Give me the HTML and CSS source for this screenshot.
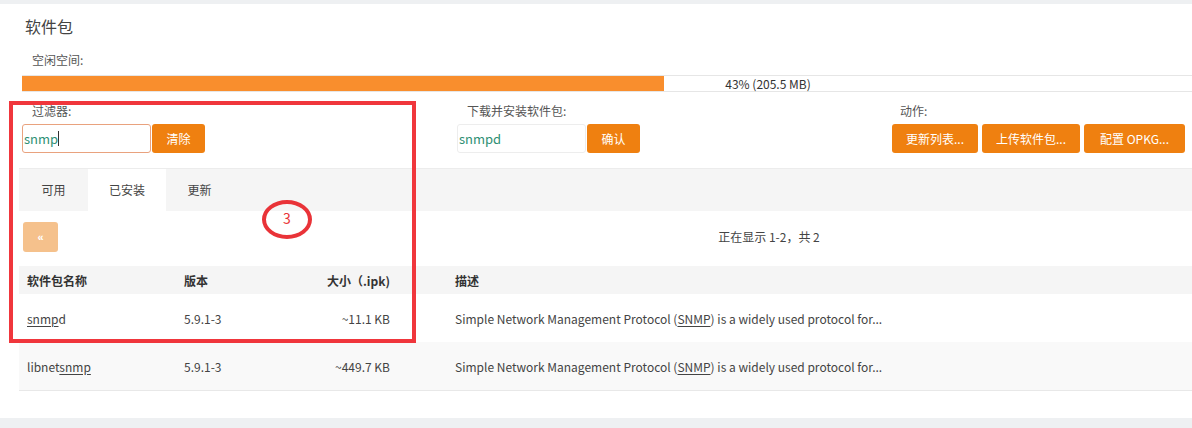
FILE: index.html
```html
<!DOCTYPE html>
<html lang="zh-CN">

<head>
  <meta charset="UTF-8">
  <meta
    name="viewport"
    content="width=device-width, initial-scale=1.0"
  >

  <title>软件包</title>

  <link rel="stylesheet" href="styles.css">
</head>

<body>
  <main class="page">
    <section class="panel">
      <h2 class="panel__title">软件包</h2>

      <div class="free">
        <div class="free__label">空闲空间:</div>
        <div class="bar">
          <div class="bar__fill" style="width: 43%"></div>
          <div class="bar__text">43% (205.5 MB)</div>
        </div>
      </div>

      <div class="controls">
        <div class="control">
          <div class="control__label">过滤器:</div>
          <div class="control__row">
            <div class="field field--focus">snmp<span class="field__caret"></span></div>
            <button class="btn">清除</button>
          </div>
        </div>

        <div class="control">
          <div class="control__label">下载并安装软件包:</div>
          <div class="control__row">
            <div class="field">snmpd</div>
            <button class="btn">确认</button>
          </div>
        </div>

        <div class="control control--actions">
          <div class="control__label">动作:</div>
          <div class="control__row control__row--gap">
            <button class="btn btn--update">更新列表...</button>
            <button class="btn btn--upload">上传软件包...</button>
            <button class="btn btn--config">配置 OPKG...</button>
          </div>
        </div>
      </div>

      <ul class="tabs">
        <li class="tabs__item">可用</li>
        <li class="tabs__item tabs__item--active">已安装</li>
        <li class="tabs__item">更新</li>
      </ul>

      <div class="pager">
        <button class="pager__prev">«</button>
        <div class="pager__info">正在显示 1-2，共 2</div>
      </div>

      <table class="pkgs">
        <thead>
          <tr>
            <th class="pkgs__name">软件包名称</th>
            <th class="pkgs__version">版本</th>
            <th class="pkgs__size">大小（.ipk)</th>
            <th class="pkgs__desc">描述</th>
          </tr>
        </thead>
        <tbody>
          <tr>
            <td><u>snmp</u>d</td>
            <td>5.9.1-3</td>
            <td class="pkgs__size">~11.1 KB</td>
            <td>Simple Network Management Protocol (<u>SNMP</u>) is a widely used protocol for...</td>
          </tr>
          <tr class="pkgs__row--alt">
            <td>libnet<u>snmp</u></td>
            <td>5.9.1-3</td>
            <td class="pkgs__size">~449.7 KB</td>
            <td>Simple Network Management Protocol (<u>SNMP</u>) is a widely used protocol for...</td>
          </tr>
        </tbody>
      </table>

      <!-- annotation drawn over the screenshot -->
      <div class="mark"></div>
      <div class="mark-circle">3</div>
    </section>
  </main>
</body>

</html>
```

FILE: styles.css
```css
body {
  margin: 0;
  overflow: hidden;
  background-color: #eef0f2;
  font-family: 'Noto Sans CJK SC', 'Open Sans', sans-serif;
  font-size: 12px;
  color: #444;
}

.page {
  padding-top: 4px;
  width: 1536px;
}

.panel {
  position: relative;
  background-color: #fff;
  height: 414px;
  padding-left: 19px;
  box-sizing: border-box;
}

.panel__title {
  margin: 0;
  padding: 12px 0 0 6px;
  font-size: 16px;
  font-weight: normal;
  line-height: 20px;
  color: #444;
}

.free {
  padding-left: 3px;
}

.free__label {
  padding: 16px 0 0 10px;
  line-height: 16px;
  color: #555;
}

.bar {
  position: relative;
  margin-top: 7px;
  width: 1492px;
  height: 17px;
  border-top: 1px solid #e6e6e6;
  border-bottom: 1px solid #e6e6e6;
  box-sizing: border-box;
}

.bar__fill {
  height: 100%;
  background-color: #f98e2d;
}

.bar__text {
  position: absolute;
  top: 0;
  left: 0;
  right: 0;
  text-align: center;
  line-height: 15px;
  color: #333;
}

.controls {
  display: grid;
  grid-template-columns: 435px 435px 435px;
  padding: 11px 0 15px 3px;
  border-bottom: 1px solid #ececec;
  width: 1495px;
}

.control__label {
  padding-left: 10px;
  line-height: 16px;
  margin-bottom: 5px;
  color: #555;
}

.control--actions .control__label {
  padding-left: 8px;
}

.control__row {
  display: flex;
  gap: 1px;
}

.control__row--gap {
  gap: 4px;
}

.field {
  width: 129px;
  height: 29px;
  box-sizing: border-box;
  border: 1px solid #ededed;
  border-radius: 3px;
  padding-left: 1px;
  line-height: 27px;
  font-size: 13px;
  color: #2f8f74;
  display: flex;
  align-items: center;
}

.field--focus {
  border-color: #e9a27e;
}

.field__caret {
  display: inline-block;
  width: 1px;
  height: 15px;
  background-color: #333;
}

.btn {
  height: 29px;
  width: 53px;
  border: none;
  border-radius: 3px;
  background-color: #ef8010;
  color: #fff;
  font-family: 'Noto Sans CJK SC', 'Open Sans', sans-serif;
  font-size: 12px;
  padding: 0;
}

.btn--update {
  width: 86px;
}

.btn--upload {
  width: 98px;
}

.btn--config {
  width: 101px;
}

.tabs {
  list-style-type: none;
  margin: 0;
  padding: 0;
  display: flex;
  height: 42px;
  background-color: #f5f5f5;
}

.tabs__item {
  width: 69px;
  line-height: 42px;
  text-align: center;
  color: #444;
}

.tabs__item--active {
  width: 78px;
  background-color: #fff;
}

.tabs__item:last-child {
  width: 67px;
}

.pager {
  display: flex;
  align-items: flex-start;
  height: 55px;
  padding-top: 11px;
  box-sizing: border-box;
  width: 1500px;
  position: relative;
}

.pager__prev {
  margin-left: 4px;
  width: 35px;
  height: 30px;
  border: none;
  border-radius: 3px;
  background-color: #f5c18c;
  color: #fff;
  font-size: 11px;
  font-weight: bold;
  padding: 0;
}

.pager__info {
  position: absolute;
  top: 17px;
  left: 0;
  right: 0;
  line-height: 18px;
  text-align: center;
  pointer-events: none;
  color: #444;
}

.pkgs {
  border-collapse: collapse;
  width: 1500px;
  table-layout: fixed;
}

.pkgs th {
  background-color: #f5f5f5;
  height: 28px;
  padding: 0 8px;
  text-align: left;
  font-weight: bold;
  color: #333;
}

.pkgs td {
  height: 48px;
  padding: 0 8px;
  color: #444;
  white-space: nowrap;
}

.pkgs u {
  text-underline-offset: 2px;
}

.pkgs__name {
  width: 141px;
}

.pkgs__version {
  width: 108px;
}

.pkgs__size {
  width: 82px;
}

.pkgs th.pkgs__size,
.pkgs td.pkgs__size {
  text-align: right;
  padding-right: 10px;
}

.pkgs th.pkgs__desc {
  padding-left: 55px;
}

.pkgs td:last-child {
  padding-left: 55px;
}

.pkgs__row--alt td {
  background-color: #f9f9f9;
  border-bottom: 1px solid #e8e8e8;
}

.mark {
  position: absolute;
  left: 9px;
  top: 97px;
  width: 407px;
  height: 242px;
  box-sizing: border-box;
  border: 4px solid #f0363c;
}

.mark-circle {
  position: absolute;
  left: 262px;
  top: 196px;
  width: 50px;
  height: 39px;
  box-sizing: border-box;
  border: 4px solid #e93338;
  border-radius: 50%;
  text-align: center;
  line-height: 28px;
  font-size: 14px;
  color: #e93338;
}
```
